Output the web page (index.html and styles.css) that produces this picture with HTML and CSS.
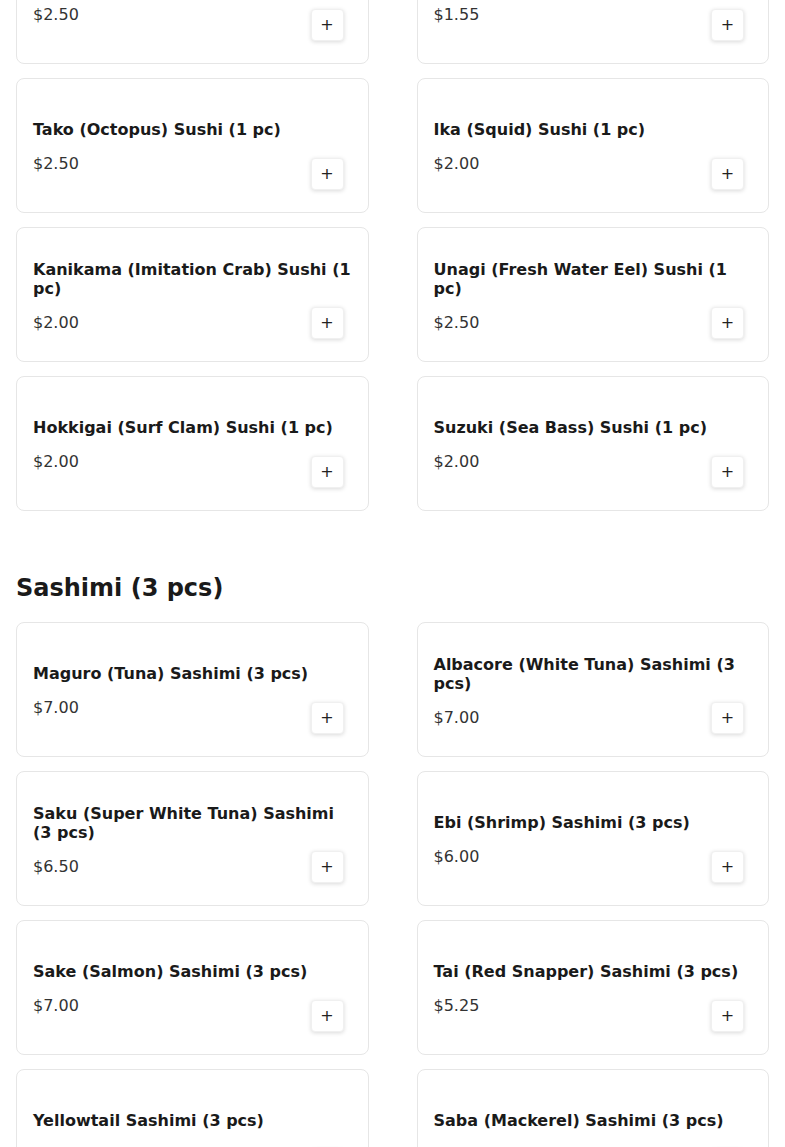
FILE: index.html
```html
<!DOCTYPE html>
<html lang="en">
<head>
<meta charset="utf-8">
<title>Menu</title>
<link rel="stylesheet" href="styles.css">
</head>
<body>
<main class="menu">
  <section class="section section-first">
    <div class="grid">
      <div class="card"><div class="info"><div class="title">Hamachi (Yellowtail) Sushi (1 pc)</div><div class="price">$2.50</div></div><button class="add">+</button></div>
      <div class="card"><div class="info"><div class="title">Tamago (Egg) Sushi (1 pc)</div><div class="price">$1.55</div></div><button class="add">+</button></div>
      <div class="card"><div class="info"><div class="title">Tako (Octopus) Sushi (1 pc)</div><div class="price">$2.50</div></div><button class="add">+</button></div>
      <div class="card"><div class="info"><div class="title">Ika (Squid) Sushi (1 pc)</div><div class="price">$2.00</div></div><button class="add">+</button></div>
      <div class="card"><div class="info"><div class="title">Kanikama (Imitation Crab) Sushi (1 pc)</div><div class="price">$2.00</div></div><button class="add">+</button></div>
      <div class="card"><div class="info"><div class="title">Unagi (Fresh Water Eel) Sushi (1 pc)</div><div class="price">$2.50</div></div><button class="add">+</button></div>
      <div class="card"><div class="info"><div class="title">Hokkigai (Surf Clam) Sushi (1 pc)</div><div class="price">$2.00</div></div><button class="add">+</button></div>
      <div class="card"><div class="info"><div class="title">Suzuki (Sea Bass) Sushi (1 pc)</div><div class="price">$2.00</div></div><button class="add">+</button></div>
    </div>
  </section>
  <section class="section">
    <h2 class="section-title">Sashimi (3 pcs)</h2>
    <div class="grid">
      <div class="card"><div class="info"><div class="title">Maguro (Tuna) Sashimi (3 pcs)</div><div class="price">$7.00</div></div><button class="add">+</button></div>
      <div class="card"><div class="info"><div class="title">Albacore (White Tuna) Sashimi (3 pcs)</div><div class="price">$7.00</div></div><button class="add">+</button></div>
      <div class="card"><div class="info"><div class="title">Saku (Super White Tuna) Sashimi (3 pcs)</div><div class="price">$6.50</div></div><button class="add">+</button></div>
      <div class="card"><div class="info"><div class="title">Ebi (Shrimp) Sashimi (3 pcs)</div><div class="price">$6.00</div></div><button class="add">+</button></div>
      <div class="card"><div class="info"><div class="title">Sake (Salmon) Sashimi (3 pcs)</div><div class="price">$7.00</div></div><button class="add">+</button></div>
      <div class="card"><div class="info"><div class="title">Tai (Red Snapper) Sashimi (3 pcs)</div><div class="price">$5.25</div></div><button class="add">+</button></div>
      <div class="card"><div class="info"><div class="title">Yellowtail Sashimi (3 pcs)</div><div class="price">$7.00</div></div><button class="add">+</button></div>
      <div class="card"><div class="info"><div class="title">Saba (Mackerel) Sashimi (3 pcs)</div><div class="price">$5.50</div></div><button class="add">+</button></div>
    </div>
  </section>
</main>
</body>
</html>
```
FILE: styles.css
```css
html, body {
  margin: 0;
  padding: 0;
  background: #ffffff;
}
body {
  font-family: "DejaVu Sans", sans-serif;
  color: #1a1a1a;
  overflow: hidden;
}
.menu {
  padding: 0 16px;
}
.section-first {
  margin-top: -71px;
}
.section {
  margin-bottom: 59px;
}
.section-title {
  margin: 0 0 16px;
  font-size: 24px;
  line-height: 36px;
  font-weight: bold;
  color: #1a1a1a;
}
.grid {
  display: grid;
  grid-template-columns: 1fr 1fr;
  column-gap: 48px;
  row-gap: 14px;
}
.card {
  position: relative;
  box-sizing: border-box;
  height: 135px;
  border: 1px solid #e6e6e6;
  border-radius: 8px;
  padding: 17px 16px 15px;
  display: flex;
  align-items: center;
  background: #fff;
}
.info {
  flex: 1;
  min-width: 0;
}
.title {
  font-size: 16px;
  font-weight: bold;
  line-height: normal;
  color: #1a1a1a;
}
.price {
  margin-top: 15px;
  font-size: 16px;
  line-height: normal;
  color: #333333;
}
.add {
  position: absolute;
  right: 24px;
  bottom: 22px;
  width: 33px;
  height: 32px;
  padding: 0;
  border: 1px solid #f0f0f0;
  border-radius: 4px;
  background: #ffffff;
  box-shadow: 0 1px 4px rgba(0, 0, 0, 0.15);
  font-family: "DejaVu Sans", sans-serif;
  font-size: 16px;
  line-height: 30px;
  color: #222;
  cursor: pointer;
}
```
